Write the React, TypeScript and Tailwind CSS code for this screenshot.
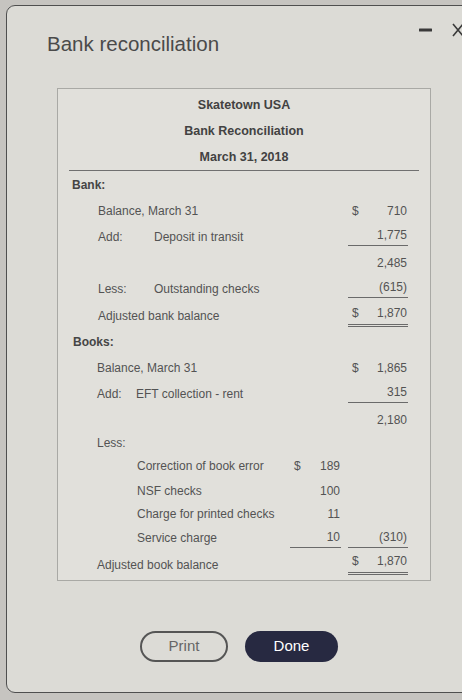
import React from 'react'

type Line = 'none' | 'single' | 'double'

interface RowProps {
  label?: React.ReactNode
  indent?: string
  bold?: boolean
  h: string
  inner?: React.ReactNode
  innerDollar?: boolean
  innerLine?: Line
  outer?: React.ReactNode
  outerDollar?: boolean
  outerLine?: Line
}

function Cell({
  value,
  dollar,
  line = 'none',
  width,
}: {
  value?: React.ReactNode
  dollar?: boolean
  line?: Line
  width: string
}) {
  const lineCls =
    line === 'single'
      ? 'h-[22px] border-b border-[#6a6a6a]'
      : line === 'double'
        ? 'h-[25px] border-b-[3px] border-double border-[#6a6a6a]'
        : 'h-full'
  return (
    <div className={`${width} ${lineCls} flex items-center justify-between pl-[4px] pr-[1px] self-start`}>
      <span>{dollar ? '$' : ''}</span>
      <span>{value}</span>
    </div>
  )
}

function Row({
  label,
  indent = 'pl-[40px]',
  bold,
  h,
  inner,
  innerDollar,
  innerLine,
  outer,
  outerDollar,
  outerLine,
}: RowProps) {
  return (
    <div className={`flex ${h}`}>
      <div className={`flex-1 flex items-center ${indent} ${bold ? 'font-bold text-[#454545]' : ''}`}>
        {label}
      </div>
      <Cell width="w-[51px]" value={inner} dollar={innerDollar} line={innerLine} />
      <div className="w-[7px]" />
      <Cell width="w-[60px]" value={outer} dollar={outerDollar} line={outerLine} />
      <div className="w-[22px]" />
    </div>
  )
}

function Pair({ a, b, gap }: { a: string; b: string; gap: string }) {
  return (
    <span className="flex">
      <span className={gap}>{a}</span>
      <span>{b}</span>
    </span>
  )
}

export default function App() {
  return (
    <div
      className="w-[462px] h-[700px] overflow-hidden bg-[#c6c4c0] pt-[5px] pl-[6px]"
      style={{ fontFamily: '"Liberation Sans", Arial, sans-serif' }}
    >
      <div className="w-[470px] h-[688px] rounded-[9px] border-[1.5px] border-[#4f4f4f] bg-[#dcdbd6]">
        {/* Header */}
        <div className="flex items-start">
          <h1 className="pl-[40px] pt-[26px] text-[20.5px] leading-[24px] text-[#4a4a4a]">
            Bank reconciliation
          </h1>
          <div className="ml-auto mr-[11px] mt-[17px] flex items-center gap-[20px] h-[14px]">
            <svg width="13" height="4" viewBox="0 0 13 4">
              <rect x="0" y="0.5" width="13" height="3" rx="0.5" fill="#3a3a3a" />
            </svg>
            <svg width="12" height="14" viewBox="0 0 12 14">
              <path d="M1 1L11 13M11 1L1 13" stroke="#3a3a3a" strokeWidth="1.6" fill="none" />
            </svg>
          </div>
        </div>

        {/* Reconciliation table */}
        <div className="ml-[50px] mt-[32px] w-[374px] h-[493px] border border-[#a9a9a5] bg-[#e1e0db] text-[12px] text-[#535353]">
          <div className="mx-[11px] pt-[3px] border-b border-[#707070] text-center font-bold text-[12.5px] text-[#424242] leading-[26px]">
            <div>Skatetown USA</div>
            <div>Bank Reconciliation</div>
            <div>March 31, 2018</div>
          </div>

          <Row h="h-[27px]" indent="pl-[14px]" bold label="Bank:" />
          <Row h="h-[26px]" label="Balance, March 31" outer="710" outerDollar />
          <Row
            h="h-[26px]"
            label={<Pair a="Add:" b="Deposit in transit" gap="w-[56px]" />}
            outer="1,775"
            outerLine="single"
          />
          <Row h="h-[26px]" outer="2,485" />
          <Row
            h="h-[26px]"
            label={<Pair a="Less:" b="Outstanding checks" gap="w-[56px]" />}
            outer="(615)"
            outerLine="single"
          />
          <Row h="h-[28px]" label="Adjusted bank balance" outer="1,870" outerDollar outerLine="double" />
          <Row h="h-[24px]" indent="pl-[15px]" bold label="Books:" />
          <Row h="h-[27px]" indent="pl-[39px]" label="Balance, March 31" outer="1,865" outerDollar />
          <Row
            h="h-[26px]"
            indent="pl-[39px]"
            label={<Pair a="Add:" b="EFT collection - rent" gap="w-[39px]" />}
            outer="315"
            outerLine="single"
          />
          <Row h="h-[26px]" outer="2,180" />
          <Row h="h-[20px]" indent="pl-[39px]" label="Less:" />
          <Row h="h-[26px]" indent="pl-[79px]" label="Correction of book error" inner="189" innerDollar />
          <Row h="h-[23px]" indent="pl-[79px]" label="NSF checks" inner="100" />
          <Row h="h-[24px]" indent="pl-[79px]" label="Charge for printed checks" inner="11" />
          <Row
            h="h-[24px]"
            indent="pl-[79px]"
            label="Service charge"
            inner="10"
            innerLine="single"
            outer="(310)"
            outerLine="single"
          />
          <Row
            h="h-[29px]"
            indent="pl-[39px]"
            label="Adjusted book balance"
            outer="1,870"
            outerDollar
            outerLine="double"
          />
        </div>

        {/* Actions */}
        <div className="mt-[50px] ml-[133px] flex gap-[17px]">
          <button className="w-[88px] h-[31px] rounded-full border-2 border-[#555555] text-[15px] text-[#666666]">
            Print
          </button>
          <button className="w-[93px] h-[31px] rounded-full bg-[#272941] text-[15px] text-white">
            Done
          </button>
        </div>
      </div>
    </div>
  )
}
